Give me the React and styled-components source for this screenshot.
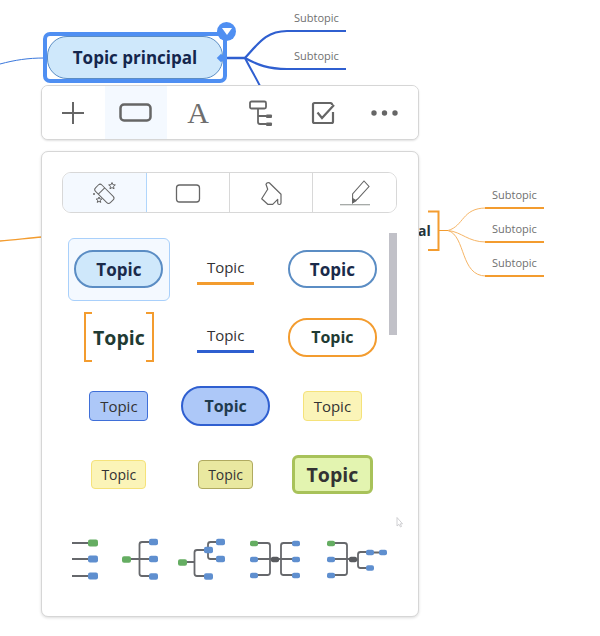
import React from "react";
import styled, { createGlobalStyle } from "styled-components";

const GlobalStyle = createGlobalStyle`
  html, body {
    margin: 0;
    padding: 0;
    background: #fff;
    font-family: "Open Sans", "Noto Sans", sans-serif;
  }
`;

const Canvas = styled.div`
  position: relative;
  width: 600px;
  height: 636px;
  overflow: hidden;
  background: #fff;
`;

const Lines = styled.svg`
  position: absolute;
  left: 0;
  top: 0;
`;

const SelectedNode = styled.div`
  position: absolute;
  left: 43px;
  top: 32px;
  width: 184px;
  height: 51px;
  box-sizing: border-box;
  border: 4px solid #4f8ff2;
  border-radius: 7px;
  background: #fff;
`;

const NodePill = styled.div`
  height: 100%;
  box-sizing: border-box;
  display: flex;
  align-items: center;
  justify-content: center;
  background: #cfe8fb;
  border: 1.5px solid #5b8dc4;
  border-radius: 20px;
  color: #14264d;
  font-size: 17px;
  font-weight: 700;
`;

const NodeMenu = styled.div`
  position: absolute;
  left: 217px;
  top: 22px;
  width: 19px;
  height: 19px;
  border-radius: 50%;
  background: #4f8ff2;
  &::after {
    content: "";
    position: absolute;
    left: 4.5px;
    top: 6px;
    border-left: 5px solid transparent;
    border-right: 5px solid transparent;
    border-top: 7px solid #fff;
  }
`;

const NodeHandle = styled.div`
  position: absolute;
  left: 218px;
  top: 55px;
  width: 6px;
  height: 6px;
  background: #4f8ff2;
  transform: rotate(45deg);
`;

const SubLabel = styled.span`
  position: absolute;
  left: ${(p) => p.$x}px;
  top: ${(p) => p.$y}px;
  color: #707070;
  font-size: 11px;
  line-height: 14px;
`;

const ClippedLabel = styled.span`
  position: absolute;
  left: 418px;
  top: 221px;
  color: #24343a;
  font-size: 14px;
  font-weight: 700;
  line-height: 19px;
`;

const Toolbar = styled.div`
  position: absolute;
  left: 41px;
  top: 85px;
  width: 378px;
  height: 55px;
  box-sizing: border-box;
  display: flex;
  background: #fff;
  border: 1px solid #d6d6d6;
  border-radius: 7px;
  box-shadow: 0 1px 2px rgba(0, 0, 0, 0.12);
  overflow: hidden;
`;

const ToolButton = styled.div`
  flex: 1;
  display: flex;
  align-items: center;
  justify-content: center;
  background: ${(p) => (p.$active ? "#f4f9ff" : "#fff")};
`;

const LetterIcon = styled.span`
  color: #6e6e6e;
  font-family: "Liberation Serif", serif;
  font-size: 30px;
  line-height: 1;
  margin-left: -1px;
`;

const Panel = styled.div`
  position: absolute;
  left: 41px;
  top: 151px;
  width: 378px;
  height: 466px;
  box-sizing: border-box;
  padding: 20px;
  background: #fff;
  border: 1px solid #d6d6d6;
  border-radius: 7px;
  box-shadow: 0 1px 3px rgba(0, 0, 0, 0.14);
`;

const Tabs = styled.div`
  display: flex;
  width: 335px;
  height: 41px;
  box-sizing: border-box;
  border: 1px solid #d8d8d8;
  border-radius: 9px;
  overflow: hidden;
`;

const Tab = styled.div`
  flex: 1;
  display: flex;
  align-items: center;
  justify-content: center;
  background: ${(p) => (p.$active ? "#f4f9ff" : "#fff")};
  border-right: 1px solid ${(p) => (p.$active ? "#b0d6fc" : "#d8d8d8")};
  &:nth-child(2) {
    flex: 0 0 82px;
  }
  &:last-child {
    border-right: none;
  }
`;

const StyleGrid = styled.div`
  display: grid;
  grid-template-columns: repeat(3, 106.75px);
  grid-auto-rows: 68.3px;
  place-items: center;
  margin: 22px 0 0 3.5px;
`;

const SelectedCard = styled.div`
  width: 102px;
  height: 63px;
  box-sizing: border-box;
  display: flex;
  align-items: center;
  justify-content: center;
  background: #f4f9ff;
  border: 1px solid #a9d0fb;
  border-radius: 6px;
`;

const Chip = styled.div`
  width: ${(p) => p.$w}px;
  height: ${(p) => p.$h}px;
  box-sizing: border-box;
  display: flex;
  align-items: center;
  justify-content: center;
  background: ${(p) => p.$bg || "#fff"};
  border: ${(p) => p.$bw || 1}px solid ${(p) => p.$line};
  border-radius: ${(p) => p.$radius}px;
  color: ${(p) => p.$color || "#333"};
  font-size: ${(p) => p.$size || 15}px;
  font-weight: ${(p) => (p.$bold ? 700 : 400)};
`;

const UnderlinedTopic = styled.div`
  width: 57px;
  box-sizing: border-box;
  padding-bottom: 5px;
  margin-top: 3px;
  text-align: center;
  color: #333;
  font-size: 15px;
  line-height: 20px;
  border-bottom: 3px solid ${(p) => p.$line};
`;

const BracketTopic = styled.div`
  position: relative;
  width: 70px;
  height: 50px;
  display: flex;
  align-items: center;
  justify-content: center;
  color: #1f3b33;
  font-size: 19.5px;
  font-weight: 700;
  &::before,
  &::after {
    content: "";
    position: absolute;
    top: 0;
    bottom: 0;
    width: 6px;
    border: 2.5px solid #f39c2f;
  }
  &::before {
    left: 0;
    border-right: none;
  }
  &::after {
    right: 0;
    border-left: none;
  }
`;

const ScrollThumb = styled.div`
  position: absolute;
  left: 347px;
  top: 81px;
  width: 8px;
  height: 102px;
  background: #c1c1c8;
`;

const PointerMark = styled.svg`
  position: absolute;
  left: 354px;
  top: 365px;
`;

const LayoutRow = styled.div`
  display: flex;
  margin: 27px 0 0 8px;
`;

const Green = "#65ad62";
const Blue = "#5f8fcf";
const Dark = "#5a5c60";

const Box = ({ x, y, w = 9, h = 6.5, fill = Blue }) => (
  <rect x={x} y={y - h / 2} width={w} height={h} rx="2" fill={fill} />
);

const Stroke = ({ d, width = 1.8 }) => (
  <path d={d} fill="none" stroke="#66686c" strokeWidth={width} strokeLinejoin="round" />
);

const layouts = [
  {
    x: 70,
    w: 40,
    body: (
      <>
        <Stroke d="M72 543H90M72 559H90M72 576H90" width={2} />
        <Box x={88} y={543} w={10} h={7} fill={Green} />
        <Box x={88} y={559} w={10} h={7} />
        <Box x={88} y={576} w={10} h={7} />
      </>
    ),
  },
  {
    x: 110,
    w: 60,
    body: (
      <>
        <Stroke d="M130 559H150M150 542H142Q139.5 542 139.5 544.500V573.500Q139.500 576 142 576H150" />
        <Box x={122} y={559.500} fill={Green} />
        <Box x={149} y={542} />
        <Box x={149} y={559} />
        <Box x={149} y={576.500} />
      </>
    ),
  },
  {
    x: 170,
    w: 67,
    body: (
      <>
        <Stroke d="M185 562H194.500M205 550H197Q194.500 550 194.500 552.500V573.500Q194.500 576 197 576H205" />
        <Stroke d="M217 542H210.500Q208 542 208 544.500V556.500Q208 559 210.500 559H217" />
        <Box x={178} y={562.500} fill={Green} />
        <Box x={204} y={550} />
        <Box x={216} y={542} />
        <Box x={216} y={559} />
        <Box x={204} y={576.500} />
      </>
    ),
  },
  {
    x: 237,
    w: 76,
    body: (
      <>
        <Stroke d="M257 543H267.500Q270 543 270 545.500V572.500Q270 575 267.500 575H257M257 559H293M293 543H283.500Q281 543 281 545.500V572.500Q281 575 283.500 575H293" />
        <Box x={250} y={543.500} w={8} h={5.5} fill={Green} />
        <Box x={250} y={559.500} w={8} h={5.5} />
        <Box x={250} y={575.500} w={8} h={5.5} />
        <Box x={271} y={559.500} w={8} h={5.5} fill={Dark} />
        <Box x={292} y={543.500} w={8} h={5.5} />
        <Box x={292} y={559.500} w={8} h={5.5} />
        <Box x={292} y={575.500} w={8} h={5.5} />
      </>
    ),
  },
  {
    x: 313,
    w: 80,
    body: (
      <>
        <Stroke d="M334 543H344.500Q347 543 347 545.500V572.500Q347 575 344.500 575H334M334 559H350M367 552H360.500Q358 552 358 554.500V565.500Q358 568 360.500 568H367M356 559.500H358M373 552.500H380" />
        <Box x={327} y={543.500} w={8} h={5.5} fill={Green} />
        <Box x={327} y={559.500} w={8} h={5.5} />
        <Box x={327} y={575.500} w={8} h={5.5} />
        <Box x={349} y={559.500} w={8} h={5.5} fill={Dark} />
        <Box x={366} y={552.500} w={8} h={5.5} />
        <Box x={366} y={568} w={8} h={5.5} />
        <Box x={379} y={552.500} w={8} h={5.5} />
      </>
    ),
  },
];

const IconStroke = "#666";

const PlusIcon = () => (
  <svg width="32" height="32" viewBox="0 0 32 32" fill="none" stroke={IconStroke} strokeWidth="2">
    <path d="M5 16H27M16 5V27" />
  </svg>
);

const ShapeIcon = () => (
  <svg width="36" height="32" viewBox="0 0 36 32" fill="none" stroke={IconStroke} strokeWidth="2.5">
    <rect x="2.500" y="7.500" width="30" height="16" rx="3.500" />
  </svg>
);

const TreeIcon = () => (
  <svg width="32" height="32" viewBox="0 0 32 32" fill="none" stroke={IconStroke} strokeWidth="1.800">
    <rect x="5" y="4.500" width="16" height="7" rx="1.500" />
    <path d="M13 11.500V25Q13 27 15 27H21M13 19H21" />
    <rect x="21" y="17.500" width="6" height="3.500" rx="1" fill={IconStroke} stroke="none" />
    <rect x="21" y="25.500" width="6" height="3.500" rx="1" fill={IconStroke} stroke="none" />
  </svg>
);

const CheckIcon = () => (
  <svg width="32" height="32" viewBox="0 0 32 32" fill="none" stroke={IconStroke} strokeWidth="2.200">
    <path d="M24 8V7.500Q24 6 22.500 6H6.500Q5 6 5 7.500V24.500Q5 26 6.500 26H23.500Q25 26 25 24.500V15" />
    <path d="M9.500 15.500L14 21L26 8" />
  </svg>
);

const DotsIcon = () => (
  <svg width="32" height="32" viewBox="0 0 32 32" fill={IconStroke}>
    <circle cx="3" cy="16" r="2.700" />
    <circle cx="13.500" cy="16" r="2.700" />
    <circle cx="24" cy="16" r="2.700" />
  </svg>
);

const starPoints = (cx, cy, r) => {
  const pts = [];
  for (let i = 0; i < 10; i++) {
    const rad = i % 2 === 0 ? r : r * 0.45;
    const a = (Math.PI / 5) * i - Math.PI / 2;
    pts.push(`${(cx + rad * Math.cos(a)).toFixed(2)},${(cy + rad * Math.sin(a)).toFixed(2)}`);
  }
  return pts.join(" ");
};

const WandIcon = () => (
  <svg width="36" height="32" viewBox="0 0 36 32" fill="none" stroke={IconStroke} strokeWidth="1">
    <g transform="rotate(45 18 16.500)">
      <rect x="8" y="12" width="21" height="9" rx="2.500" />
      <path d="M14.500 12V21" />
    </g>
    <polygon points={starPoints(26, 9, 3.500)} />
    <polygon points={starPoints(13, 23, 3)} />
    <circle cx="8" cy="17" r="1" fill={IconStroke} stroke="none" />
  </svg>
);

const RectIcon = () => (
  <svg width="36" height="32" viewBox="0 0 36 32" fill="none" stroke={IconStroke} strokeWidth="1.300">
    <rect x="6.500" y="8" width="23" height="17" rx="3" />
  </svg>
);

const BucketIcon = () => (
  <svg width="36" height="32" viewBox="0 0 36 32" fill="none" stroke={IconStroke} strokeWidth="1.200" strokeLinejoin="round">
    <path d="M16.300 5.700L28 17.300V26Q28 27.500 26.300 27.500Q24.700 27.500 24.700 26V22.300L19.700 27.300H14.700L8.700 21.700L14.700 12.300L13 7.300Q14 5 16.300 5.700Z" />
  </svg>
);

const PenIcon = () => (
  <svg width="36" height="32" viewBox="0 0 36 32" fill="none" stroke={IconStroke} strokeWidth="1.100">
    <polygon points="15.600,25.700 15.600,17 27,4 32,9.500 20.600,22" />
    <polygon points="15.600,25.700 15.600,21.500 19,23.700" fill={IconStroke} />
    <path d="M3 27.800H33" stroke="#8a8f8c" />
  </svg>
);

const MapLines = () => (
  <Lines width="600" height="636" viewBox="0 0 600 636" fill="none">
    <path d="M0 64C15 60 28 58 44 58" stroke="#3b78dc" strokeWidth="1" />
    <path d="M225 58H245" stroke="#2f5fd0" strokeWidth="2.500" />
    <path d="M245 58C258 44 266 31 287 31H346" stroke="#2f5fd0" strokeWidth="2.200" />
    <path d="M245 58C258 65 268 69 287 69H346" stroke="#2f5fd0" strokeWidth="2.200" />
    <path d="M245 58C250 68 255 76 260 86" stroke="#2f5fd0" strokeWidth="2" />
    <path d="M0 241C15 240 28 238 42 237" stroke="#f39c2f" strokeWidth="1.300" />
    <path d="M428 211.500H438.500V250H428" stroke="#f39c2f" strokeWidth="2" />
    <path d="M439 230.500H448" stroke="#f39c2f" strokeWidth="1" />
    <path d="M448 230.500C464 226 462 208 486 208" stroke="#f6b566" strokeWidth="1" />
    <path d="M448 230.500C462 232 468 242 486 242" stroke="#f6b566" strokeWidth="1" />
    <path d="M448 230.500C466 236 460 276 486 276" stroke="#f6b566" strokeWidth="1" />
    <path d="M485 208H544M485 242H544M485 276H544" stroke="#f39c2f" strokeWidth="2.200" />
  </Lines>
);

const subLabels = [
  [294, 11],
  [294, 49],
  [492, 188],
  [492, 222],
  [492, 256],
];

export default function App() {
  return (
    <Canvas>
      <GlobalStyle />
      <MapLines />
      {subLabels.map(([x, y]) => (
        <SubLabel key={`${x}-${y}`} $x={x} $y={y}>
          Subtopic
        </SubLabel>
      ))}
      <ClippedLabel>al</ClippedLabel>

      <SelectedNode>
        <NodePill>Topic principal</NodePill>
      </SelectedNode>
      <NodeHandle />
      <NodeMenu />

      <Toolbar>
        <ToolButton>
          <PlusIcon />
        </ToolButton>
        <ToolButton $active>
          <ShapeIcon />
        </ToolButton>
        <ToolButton>
          <LetterIcon>A</LetterIcon>
        </ToolButton>
        <ToolButton>
          <TreeIcon />
        </ToolButton>
        <ToolButton>
          <CheckIcon />
        </ToolButton>
        <ToolButton>
          <DotsIcon />
        </ToolButton>
      </Toolbar>

      <Panel>
        <Tabs>
          <Tab $active>
            <WandIcon />
          </Tab>
          <Tab>
            <RectIcon />
          </Tab>
          <Tab>
            <BucketIcon />
          </Tab>
          <Tab>
            <PenIcon />
          </Tab>
        </Tabs>

        <StyleGrid>
          <SelectedCard>
            <Chip $w={89} $h={38} $bg="#cfe8fb" $line="#5b8dc4" $bw={2} $radius={19} $size={17} $bold $color="#1a2a4a">
              Topic
            </Chip>
          </SelectedCard>
          <UnderlinedTopic $line="#f39c2f">Topic</UnderlinedTopic>
          <Chip $w={89} $h={38} $line="#5b8dc4" $bw={2} $radius={19} $size={17} $bold $color="#1a2a4a">
            Topic
          </Chip>

          <BracketTopic>Topic</BracketTopic>
          <UnderlinedTopic $line="#2f5fd0">Topic</UnderlinedTopic>
          <Chip $w={89} $h={39} $line="#f39c2f" $bw={2} $radius={19} $size={16} $bold $color="#1f3b33">
            Topic
          </Chip>

          <Chip $w={59} $h={30} $bg="#adc8f8" $line="#3f6fd8" $radius={4}>
            Topic
          </Chip>
          <Chip $w={89} $h={40} $bg="#adc8f8" $line="#2f5fd0" $bw={2} $radius={20} $size={16} $bold $color="#1f3b4f">
            Topic
          </Chip>
          <Chip $w={59} $h={30} $bg="#fbf4b8" $line="#f5e27a" $radius={4}>
            Topic
          </Chip>

          <Chip $w={55} $h={29} $bg="#fbf4b8" $line="#f5e27a" $radius={4} $size={14}>
            Topic
          </Chip>
          <Chip $w={55} $h={29} $bg="#e9e8a0" $line="#b0aa60" $radius={4} $size={14}>
            Topic
          </Chip>
          <Chip $w={81} $h={39} $bg="#e3f4b0" $line="#a8c25a" $bw={3} $radius={6} $size={19.5} $bold>
            Topic
          </Chip>
        </StyleGrid>

        <LayoutRow>
          {layouts.map((l) => (
            <svg key={l.x} width={l.w} height="48" viewBox={`${l.x} 535 ${l.w} 48`}>
              {l.body}
            </svg>
          ))}
        </LayoutRow>

        <ScrollThumb />
        <PointerMark width="7" height="11" viewBox="0 0 7 11" fill="#fff" stroke="#c4c4c8" strokeWidth="0.800">
          <path d="M1 0.500V9L3 7.300L4.500 10L5.500 9.500L4.300 6.800H6.500Z" />
        </PointerMark>
      </Panel>
    </Canvas>
  );
}
